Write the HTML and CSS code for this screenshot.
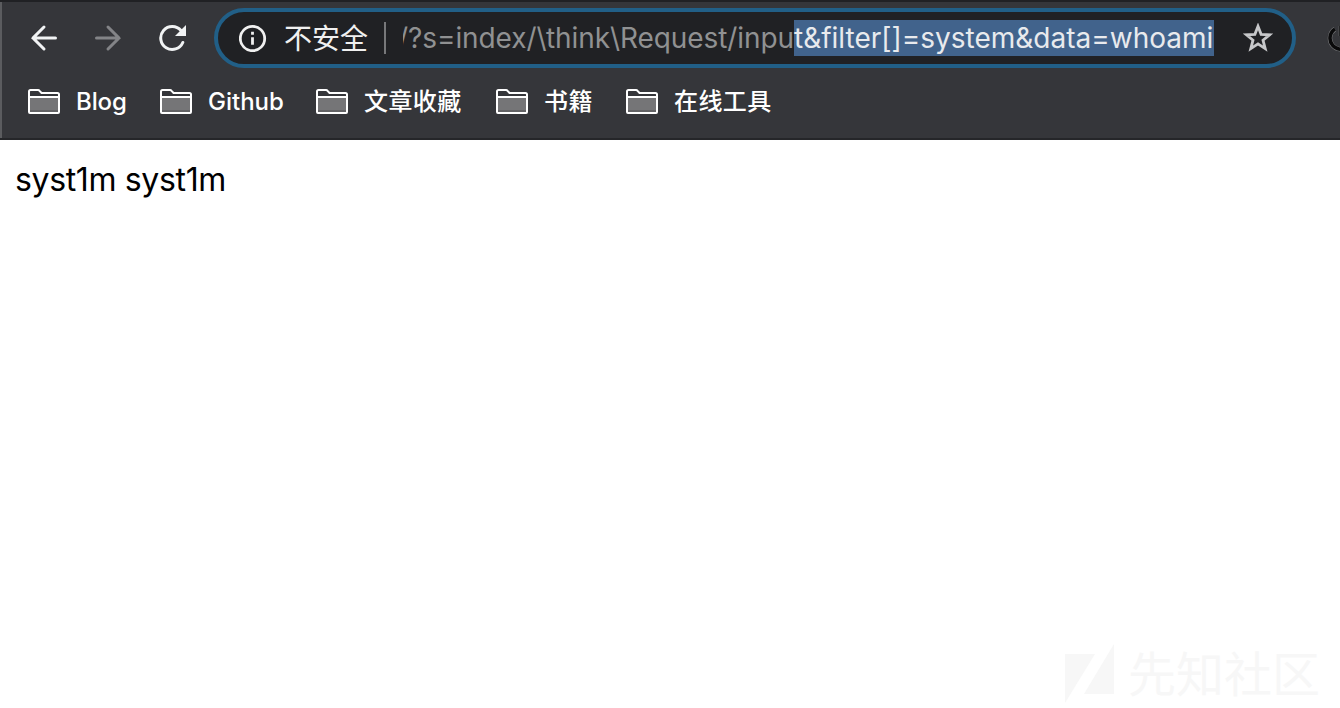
FILE: index.html
```html
<!DOCTYPE html>
<html lang="zh-CN">
<head>
<meta charset="utf-8">
<title>syst1m</title>
<link rel="stylesheet" href="styles.css">
</head>
<body>
<svg class="defs" width="0" height="0"><defs>
<symbol id="folder" viewBox="0 0 32 26"><path d="M2 8h28v13H2z" fill="#757577"/><path d="M2 21h28v2H2z" fill="#636365"/><path d="M1 8V2.500Q1 1 2.500 1H10q1 0 1.600.8L13.500 4H29.500Q31 4 31 5.500V23Q31 24 30 24H2Q1 24 1 23ZM1 8H31" fill="none" stroke="#fff" stroke-width="2"/></symbol>
</defs></svg>
<header class="chrome">
  <div class="toolbar">
    <nav class="controls">
      <svg class="back" viewBox="0 0 28 28"><path d="M25.500 14H3M14 3 3 14 14 25"/></svg>
      <svg class="forward" viewBox="0 0 28 28"><path d="M2.500 14H25M14 3 25 14 14 25"/></svg>
      <svg class="reload" viewBox="0 0 28 28"><path d="M24.800 18.500A11.500 11.500 0 1 1 23 6.500"/><path class="tip" d="M28 1V12H17Z"/></svg>
    </nav>
    <div class="omnibox">
      <svg class="info" viewBox="0 0 28 28"><circle cx="13.500" cy="14.500" r="12.200"/><path d="M13.500 13.200v7.500M13.500 7.800v3"/></svg>
      <span class="status">不安全</span>
      <span class="divider"></span>
      <div class="url"><span class="path"><span class="cut">/</span>?s=index/\think\Request/inpu</span><span class="selected">t&amp;filter[]=system&amp;data=whoami</span></div>
      <svg class="star" viewBox="0 0 30 30"><path d="M15 3.300 18.100 11.300 26.600 11.800 20 17.200 22.200 25.600 15 20.900 7.800 25.600 10 17.200 3.400 11.800 11.900 11.300Z"/></svg>
    </div>
    <svg class="power" viewBox="0 0 28 28"><path class="rim" d="M8 5A11 11 0 1 0 20 5M14 2v10"/><path d="M8 5A11 11 0 1 0 20 5M14 2v10"/></svg>
  </div>
  <nav class="bookmarks">
    <a class="bookmark"><svg><use href="#folder"/></svg><span class="blog">Blog</span></a>
    <a class="bookmark"><svg><use href="#folder"/></svg><span class="github">Github</span></a>
    <a class="bookmark"><svg><use href="#folder"/></svg><span class="four">文章收藏</span></a>
    <a class="bookmark"><svg><use href="#folder"/></svg><span class="two">书籍</span></a>
    <a class="bookmark"><svg><use href="#folder"/></svg><span class="four">在线工具</span></a>
  </nav>
</header>
<main class="page">
  <p class="output">syst1m syst1m</p>
  <div class="watermark"><svg viewBox="0 0 50 60"><path d="M0 10H30L0 59ZM49 0V50H19Z"/></svg><span>先知社区</span></div>
</main>
</body>
</html>
```
FILE: styles.css
```css
* { box-sizing: border-box; }
body { margin: 0; width: 1340px; height: 708px; overflow: hidden; display: flex; flex-direction: column; background: #fff; font-family: Inter, "Noto Sans CJK SC", sans-serif; }
.defs { position: absolute; }
svg { display: block; flex: none; fill: none; }
.chrome { height: 140px; flex: none; background: #35363a; border-top: 2px solid #202124; border-bottom: 2px solid #252629; box-shadow: inset 2px 0 #5b5c5f; }
.toolbar { display: flex; align-items: center; height: 72px; overflow: hidden; }
.controls { display: flex; gap: 36px; width: 214px; padding-left: 30px; flex: none; }
.controls svg { width: 28px; height: 28px; stroke-width: 3; stroke-linecap: round; }
.back, .reload { stroke: #f1f3f4; }
.forward { stroke: #838487; }
.reload .tip { fill: #f1f3f4; stroke: none; }
.omnibox { display: flex; align-items: center; width: 1082px; height: 60px; flex: none; border: 4px solid #215f87; border-radius: 30px; background: #202124; padding-left: 21px; }
.info { width: 28px; height: 28px; stroke: #f0f0f0; stroke-width: 2.8; }
.status { width: 85px; margin-left: 17px; padding-top: 2px; color: #f0f0f0; font-size: 28px; line-height: 40px; white-space: nowrap; }
.divider { width: 2px; height: 32px; margin-left: 15px; background: #77787a; }
.url { display: flex; width: 811px; height: 36px; margin-left: 17px; overflow: hidden; font-size: 28px; line-height: 37px; white-space: nowrap; }
.path { width: 391px; flex: none; color: #909192; letter-spacing: -.08px; }
.cut { margin-left: -5px; }
.selected { width: 420px; flex: none; background: #41638c; color: #e8eaed; }
.star { width: 30px; height: 30px; margin-left: 29px; stroke: #c7c8ca; stroke-width: 2.8; }
.power { width: 28px; height: 28px; margin-left: 31px; stroke: #0a0a0b; stroke-width: 3.5; }
.power .rim { stroke: #77787a; stroke-width: 4.500; }
.bookmarks { display: flex; gap: 32px; padding: 15px 0 0 28px; }
.bookmark { display: flex; gap: 16px; height: 26px; align-items: center; color: #fff; font-size: 24px; line-height: 26px; font-weight: 500; white-space: nowrap; }
.bookmark svg { width: 32px; height: 26px; }
.blog { width: 52px; letter-spacing: -.1px; }
.github { width: 76px; }
.four { width: 100px; letter-spacing: .4px; }
.two { width: 50px; letter-spacing: .4px; }
.page { flex: 1; display: flex; flex-direction: column; justify-content: space-between; padding: 21px 20px 3px 15px; }
.output { margin: 0; font-size: 32px; line-height: 38px; letter-spacing: -.35px; color: #000; white-space: nowrap; }
.watermark { display: flex; align-self: flex-end; align-items: center; width: 255px; height: 62px; gap: 13px; color: #f7f7f7; font-size: 48px; line-height: 60px; white-space: nowrap; }
.watermark svg { width: 50px; height: 60px; fill: #f7f7f7; }
.watermark span { padding-top: 2px; }
```
